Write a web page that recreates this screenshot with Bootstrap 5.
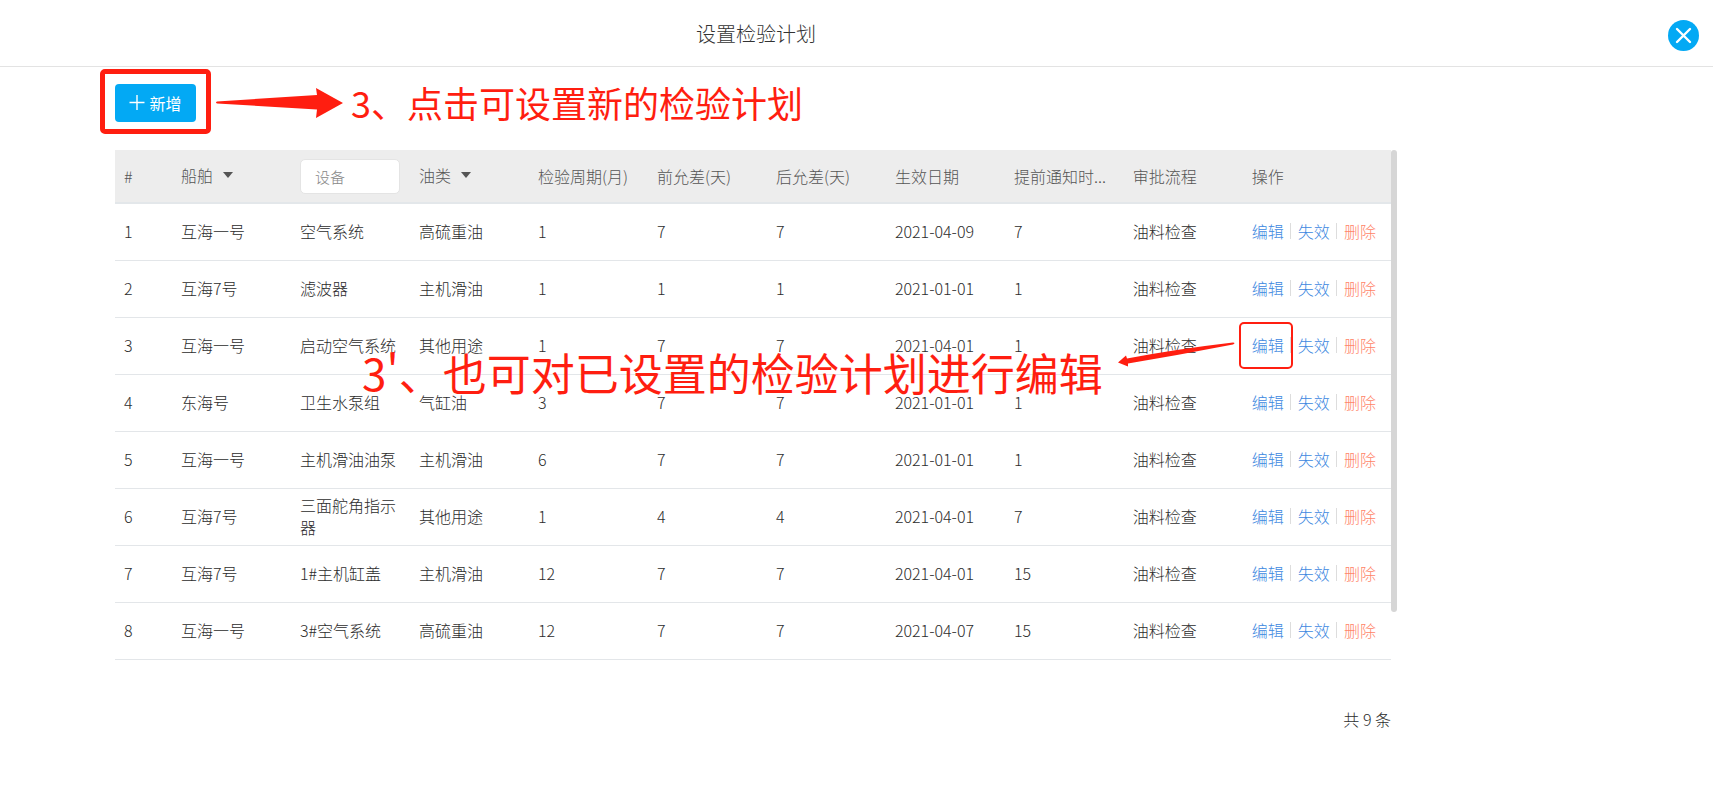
<!DOCTYPE html>
<html lang="zh-CN">
<head>
<meta charset="utf-8">
<meta name="viewport" content="width=device-width, initial-scale=1">
<title>设置检验计划</title>
<link href="https://cdn.jsdelivr.net/npm/bootstrap@5.3.0/dist/css/bootstrap.min.css" rel="stylesheet">
<style>
  body { font-family: "Noto Sans CJK SC", sans-serif; font-weight: 300; font-size: 16px; line-height: 22px; color: #2c2c2c; }
  .page-col { max-width: 1512px; }
  .page-head { height: 67px; border-bottom: 1px solid #e3e3e3; }
  .page-title { font-size: 20px; font-weight: 300; line-height: 28px; color: #333; padding-top: 20px; }
  .close-btn { top: 20px; right: 14px; width: 31px; height: 31px; }
  .page-body { padding: 17px 121px 24px 115px; }
  .toolbar { margin-bottom: 28px; height: 38px; }
  .btn-add { --bs-btn-color: #fff; --bs-btn-bg: #03a9f4; --bs-btn-hover-bg: #0398db; --bs-btn-hover-color: #fff; width: 81px; height: 38px; border: 0; border-radius: 4px; font-weight: 400; line-height: 22px; }
  .ring::after { content: ""; position: absolute; border: 5px solid #ff1e10; border-radius: 5px; inset: -15px -15px -12px; pointer-events: none; }
  .ring-sm::after { border-width: 2px; inset: -12px -9px -13px -13px; }
  .note { color: #ff1e10; font-weight: 400; font-size: 36px; line-height: 36px; white-space: nowrap; padding-bottom: 2px; }
  .note-lg { font-size: 44px; line-height: 48px; }
  .toolbar-arrow { margin-left: 20px; margin-right: 8px; }
  .edit-note { left: 247px; top: 198px; pointer-events: none; }
  .edit-arrow { left: 1002px; top: 191px; pointer-events: none; }
  .plan-table { table-layout: fixed; border-collapse: separate; border-spacing: 0; width: 100%; }
  .plan-table th, .plan-table td { padding: 0 10px 0 9px; vertical-align: middle; }
  .plan-table th { height: 54px; background: #ededed; border-bottom: 2px solid #e3e7ea; color: #555; font-weight: 300; white-space: nowrap; }
  .plan-table td { height: 57px; border-bottom: 1px solid #e3e6e9; padding-bottom: 2px; }
  .plan-table th:last-child, .plan-table td:last-child { white-space: nowrap; }
  .filter-btn { color: #555; font-weight: 300; line-height: 22px; margin-bottom: 3px; }
  .filter-btn svg { margin-left: 10px; }
  .filter-input { width: 100%; height: 35px; padding: 0 14px; font-size: 15px; font-weight: 300; border: 1px solid #e4e4e4; border-radius: 5px; }
  .filter-input::placeholder { color: #888; }
  .act { color: #3d88df; }
  .act-del { color: #ff8468; }
  .sep { width: 1px; height: 16px; background: #ddd; margin: 0 7px 0 6px; }
  .scroll-thumb { left: 100%; top: 0; bottom: 48px; width: 6px; border-radius: 3px; background: #d6d6d6; }
  .total { margin-top: 48px; }
</style>
</head>
<body>
<header class="page-head position-relative">
  <div class="page-col"><h1 class="page-title text-center mb-0">设置检验计划</h1></div>
  <button type="button" class="close-btn position-absolute btn p-0 border-0 d-flex" aria-label="关闭">
    <svg width="31" height="31" viewBox="0 0 31 31"><circle cx="15.500" cy="15.500" r="15.500" fill="#03a9f4"/><path d="M9 9l13 13M22 9L9 22" stroke="#fff" stroke-width="2.400" stroke-linecap="round"/></svg>
  </button>
</header>
<main class="page-col page-body">
  <div class="toolbar d-flex align-items-center">
    <div class="ring position-relative">
      <button type="button" class="btn btn-add p-0 d-flex align-items-center justify-content-center gap-1">
        <svg width="16" height="16" viewBox="0 0 16 16" aria-hidden="true"><path d="M8 0v15M.5 7.500h15" stroke="#fff" stroke-width="1.400"/></svg>新增
      </button>
    </div>
    <svg class="toolbar-arrow flex-shrink-0" width="127" height="30" viewBox="0 0 127 30" aria-hidden="true"><path d="M1 13.500L101 7 100 0l27 15-27 15 1-8.500L1 15.500Q-1 14.500 1 13.500z" fill="#ff1e10"/></svg>
    <div class="note">3、点击可设置新的检验计划</div>
  </div>
  <div class="position-relative">
    <table class="plan-table">
      <colgroup><col style="width:4.467%"><col style="width:9.326%"><col style="width:9.326%"><col style="width:9.326%"><col style="width:9.326%"><col style="width:9.326%"><col style="width:9.326%"><col style="width:9.326%"><col style="width:9.326%"><col style="width:9.326%"><col></colgroup>
      <thead>
        <tr>
          <th>#</th>
          <th><button type="button" class="filter-btn btn p-0 border-0 d-flex align-items-center">船舶<svg width="10" height="6" viewBox="0 0 10 6" aria-hidden="true"><path d="M0 0h10L5 6z" fill="#555"/></svg></button></th>
          <th><input class="filter-input d-block" type="text" placeholder="设备" aria-label="设备"></th>
          <th><button type="button" class="filter-btn btn p-0 border-0 d-flex align-items-center">油类<svg width="10" height="6" viewBox="0 0 10 6" aria-hidden="true"><path d="M0 0h10L5 6z" fill="#555"/></svg></button></th>
          <th>检验周期(月)</th><th>前允差(天)</th><th>后允差(天)</th><th>生效日期</th>
          <th>提前通知时...</th><th>审批流程</th><th>操作</th>
        </tr>
      </thead>
      <tbody id="plans"></tbody>
    </table>
    <div class="scroll-thumb position-absolute"></div>
    <div class="edit-note note note-lg position-absolute">3'、也可对已设置的检验计划进行编辑</div>
    <svg class="edit-arrow position-absolute" width="121" height="30" viewBox="0 0 121 30" aria-hidden="true"><path d="M1 21.500L9 14.500 10 17.500Q60 8 116 1.500 119 2 116 3.500L60 14 11 22.500 11 25.500z" fill="#ff1e10"/></svg>
  </div>
  <div class="total text-end">共 9 条</div>
</main>
<script src="https://cdn.jsdelivr.net/npm/bootstrap@5.3.0/dist/js/bootstrap.bundle.min.js"></script>
<script>
  const plans = [
    ['互海一号', '空气系统', '高硫重油', 1, 7, 7, '2021-04-09', 7],
    ['互海7号', '滤波器', '主机滑油', 1, 1, 1, '2021-01-01', 1],
    ['互海一号', '启动空气系统', '其他用途', 1, 7, 7, '2021-04-01', 1],
    ['东海号', '卫生水泵组', '气缸油', 3, 7, 7, '2021-01-01', 1],
    ['互海一号', '主机滑油油泵', '主机滑油', 6, 7, 7, '2021-01-01', 1],
    ['互海7号', '三面舵角指示器', '其他用途', 1, 4, 4, '2021-04-01', 7],
    ['互海7号', '1#主机缸盖', '主机滑油', 12, 7, 7, '2021-04-01', 15],
    ['互海一号', '3#空气系统', '高硫重油', 12, 7, 7, '2021-04-07', 15]
  ];
  document.getElementById('plans').innerHTML = plans.map((p, i) => `<tr><td>${i + 1}</td>${
    [...p, '油料检查'].map(v => `<td>${v}</td>`).join('')}<td><div class="d-flex align-items-center">
      <a href="#" class="act text-decoration-none${i === 2 ? ' ring ring-sm position-relative' : ''}">编辑</a><span class="sep"></span>
      <a href="#" class="act text-decoration-none">失效</a><span class="sep"></span>
      <a href="#" class="act act-del text-decoration-none">删除</a></div></td></tr>`).join('');
</script>
</body>
</html>
